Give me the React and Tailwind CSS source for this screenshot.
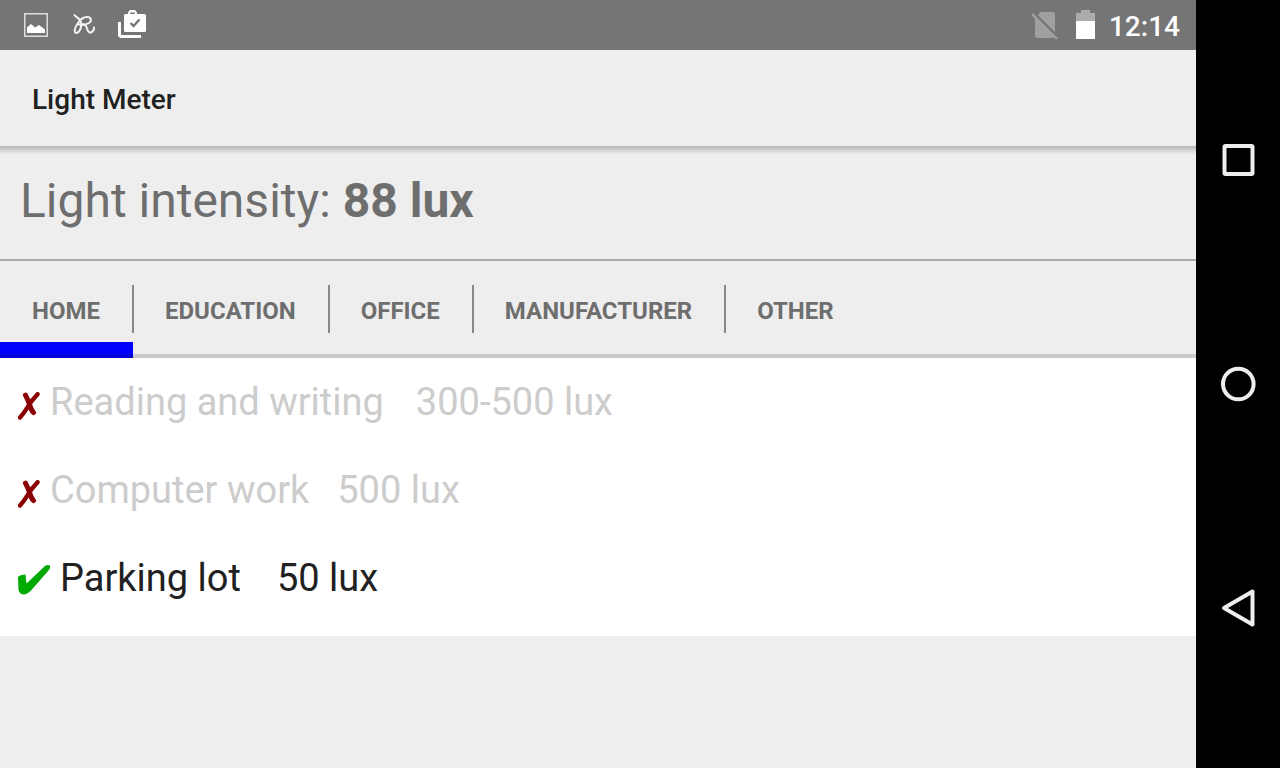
import React, { useState } from "react";

const TABS = ["Home", "Education", "Office", "Manufacturer", "Other"];

const LEVELS = [
  { name: "Reading and writing", range: "300-500 lux", ok: false, gap: "gap-8" },
  { name: "Computer work", range: "500 lux", ok: false, gap: "gap-7" },
  { name: "Parking lot", range: "50 lux", ok: true, gap: "gap-9" },
];

function StatusBar() {
  return (
    <div className="flex h-[50px] items-center justify-between bg-[#757575] pl-6 pr-4">
      <div className="flex items-center pb-0.5">
        <svg className="mt-0.5 h-6 w-6" viewBox="0 0 24 24" fill="none">
          <rect x="0.75" y="0.75" width="22.5" height="22.5" stroke="#dedede" strokeWidth="1.5" />
          <path d="M3 20V14.500l4-3.500 4 3.500 4-2.500 6 4.500v3.500z" fill="#fff" />
        </svg>
        <svg className="ml-6 h-6 w-6" viewBox="0 0 24 24" fill="none" stroke="#f4f4f4" strokeWidth="2" strokeLinecap="round" strokeLinejoin="round">
          <path d="M2.500 3C4 5.500 8 6 9 10C10 14.500 8 20.500 4.500 21C1.500 21 2.500 15.500 6 11C9 6.500 12 5 15 5C19.500 5 20 9 17 11C14.500 12.500 11 13.500 7 12.500C11 11.500 13.500 12.500 14.500 15C15.500 18 16 21 18.500 20.500C20.500 20 22 18 22 15.500" />
        </svg>
        <svg className="ml-[22px] h-7 w-7" viewBox="0 0 28 28" fill="none">
          <path d="M1.500 12v13a1.500 1.500 0 0 0 1.500 1.500h20" stroke="#fff" strokeWidth="3" />
          <path d="M10 4V2.500L12 0h5l2 2.500V4h7.500Q28 4 28 5.500v15Q28 22 26.500 22h-19Q6 22 6 20.500v-15Q6 4 7.500 4zM12.200 4h4.600V2.500h-4.600z" fill="#fff" fillRule="evenodd" />
          <path d="M12.500 13l3 3 6-6.500" stroke="#757575" strokeWidth="2.400" />
        </svg>
      </div>
      <div className="flex items-center">
        <svg className="mt-px h-7 w-7" viewBox="0 0 28 28" fill="none">
          <path d="M10 0h12q2 0 2 2v22q0 2-2 2H6q-2 0-2-2V6z" fill="#a0a0a0" />
          <path d="M2.500 0.500L28 26" stroke="#757575" strokeWidth="2.500" />
          <path d="M1 2l25 25" stroke="#a0a0a0" strokeWidth="2.400" />
        </svg>
        <svg className="mb-0.5 ml-[17px] h-[29px] w-[19px]" viewBox="0 0 19 29">
          <path d="M0 3h5V0h9v3h5v8H0z" fill="#acacac" />
          <path d="M0 11h19v18H0z" fill="#fff" />
        </svg>
        <span className="ml-3.5 pt-1 text-[28px] font-medium leading-8 text-white">12:14</span>
      </div>
    </div>
  );
}

function NavBar() {
  return (
    <nav className="flex w-[84px] shrink-0 flex-col items-center justify-center bg-black">
      <button aria-label="Recent apps" className="flex h-56 w-full items-center justify-center">
        <svg className="h-10 w-10" viewBox="0 0 40 40" fill="none" stroke="#eeeeee" strokeWidth="4">
          <rect x="6.500" y="6" width="28" height="28" rx="1" />
        </svg>
      </button>
      <button aria-label="Home screen" className="flex h-56 w-full items-center justify-center">
        <svg className="h-10 w-10" viewBox="0 0 40 40" fill="none" stroke="#eeeeee" strokeWidth="4">
          <circle cx="20.300" cy="20" r="15.300" />
        </svg>
      </button>
      <button aria-label="Back" className="flex h-56 w-full items-center justify-center">
        <svg className="h-10 w-10" viewBox="0 0 40 40" fill="none" stroke="#eeeeee" strokeWidth="4" strokeLinejoin="round">
          <path d="M34.500 3.500v33L6 20z" />
        </svg>
      </button>
    </nav>
  );
}

function LevelRow({ level }) {
  return (
    <li className="flex h-[88px] items-center pl-[18px] text-[38px] leading-[44px]">
      {level.ok ? (
        <svg className="mt-1 h-8 w-8" viewBox="0 0 32 32" role="img" aria-label="Enough light">
          <path d="M0 13Q2 10.500 7.500 10.500L8.500 19.500L27 2Q29 0.500 32 1.500Q32.500 4 30.500 6.500L13 26.500Q9 30.500 5.500 30.500Q1.500 30 0.500 26Z" fill="#00aa00" />
        </svg>
      ) : (
        <svg className="mt-2 h-7 w-[22px]" viewBox="0 0 22 28" fill="none" stroke="#8b0000" strokeLinecap="round" role="img" aria-label="Not enough light">
          <path d="M19.500 2.200Q13 9 9 16Q6 21 2 25.500" strokeWidth="4.400" />
          <path d="M7.500 3.200Q10 8 11.500 12.500Q13 18 15.500 20.500" strokeWidth="5" />
        </svg>
      )}
      <span className={`flex pl-2.5 ${level.gap} ${level.ok ? "text-[#212121]" : "text-[#cccccc]"}`}>
        <span>{level.name}</span>
        <span>{level.range}</span>
      </span>
    </li>
  );
}

export default function App() {
  const [active, setActive] = useState("Home");

  return (
    <div className="flex min-h-screen bg-[#eeeeee] font-['Roboto',sans-serif]">
      <div className="min-w-0 flex-1">
        <StatusBar />

        <header className="flex h-24 items-center px-8 pt-1">
          <h1 className="text-[28px] font-medium leading-8 text-[#212121]">Light Meter</h1>
        </header>
        <div className="h-2 bg-linear-to-b from-[#b4b4b4] to-[#eeeeee]" />

        <p className="h-[107px] border-b-2 border-[#aaaaaa] px-5 pt-[19px] text-[48px] leading-[56px] text-[#6e6e6e]">
          Light intensity: <b>88 lux</b>
        </p>

        <div role="tablist" className="relative flex h-[97px]">
          {TABS.map((tab, i) => (
            <React.Fragment key={tab}>
              {i > 0 && <span className="z-10 -mx-px mt-6 h-12 w-0.5 bg-[#888888]" />}
              <button
                role="tab"
                aria-selected={active === tab}
                onClick={() => setActive(tab)}
                className={`border-b-[16px] pl-8 pr-[33px] pt-[18px] text-2xl font-bold uppercase text-[#6e6e6e] ${active === tab ? "border-[#0000ff]" : "border-transparent"
                  }`}
              >
                {tab}
              </button>
            </React.Fragment>
          ))}
          {/* underline runs over the active tab's indicator */}
          <span className="pointer-events-none absolute inset-x-0 bottom-0 h-1 bg-black/15" />
        </div>

        <ul className="bg-white pb-3.5">
          {LEVELS.map((level) => (
            <LevelRow key={level.name} level={level} />
          ))}
        </ul>
      </div>
      <NavBar />
    </div>
  );
}
